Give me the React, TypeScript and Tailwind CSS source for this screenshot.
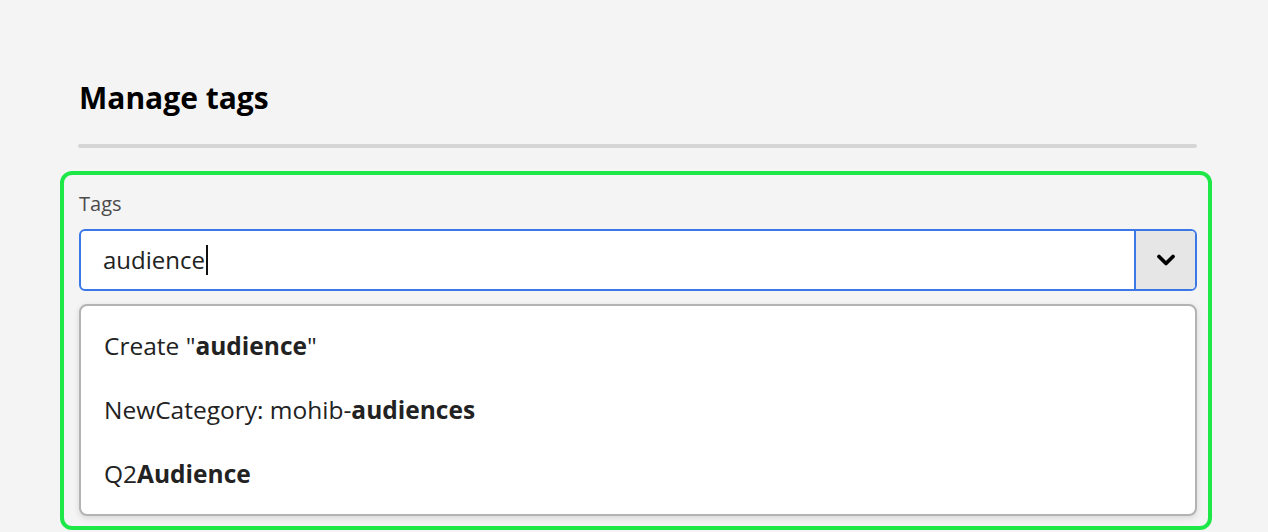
import { ChevronDown } from 'lucide-react';

const items = [
  { pre: 'Create "', bold: 'audience', post: '"' },
  { pre: 'NewCategory: mohib-', bold: 'audiences', post: '' },
  { pre: 'Q2', bold: 'Audience', post: '' },
];

export default function App() {
  return (
    <div className="min-h-[532px] bg-[#f4f4f4] pt-[78px] pl-[60px] pr-[56px] font-['Open_Sans',sans-serif] text-[#222]">
      <h1 className="ml-[19px] text-[30px] font-bold leading-[40px] text-black">Manage tags</h1>

      <div className="mt-[26px] ml-[18px] mr-[15px] h-[4px] rounded-full bg-[#d5d5d5]" />

      <div className="mt-[23px] rounded-[12px] border-4 border-[#1ee848] pl-[15px] pr-[11px] pt-[15px] pb-[10px]">
        <label className="block text-[20px] leading-[27px] text-[#4b4b4b]">Tags</label>

        <div className="mt-[12px] flex h-[62px] rounded-[6px] border-2 border-[#3b78e7] bg-white">
          <div className="flex flex-1 items-center pl-[22px] text-[24px]">
            <span>audience</span>
            <span className="ml-[1px] h-[30px] w-[2px] bg-[#111]" />
          </div>
          <button className="flex w-[61px] items-center justify-center rounded-r-[4px] border-l-2 border-[#3b78e7] bg-[#e6e6e6]">
            <ChevronDown size={28} strokeWidth={3.2} className="text-black" />
          </button>
        </div>

        <ul className="mt-[13px] rounded-[8px] border-2 border-[#b3b3b3] bg-white py-[8px] shadow-[0_2px_6px_rgba(0,0,0,0.12)]">
          {items.map((it) => (
            <li key={it.pre} className="flex h-[64px] items-center px-[23px] text-[24.5px]">
              <span>
                {it.pre}
                <b className="font-bold">{it.bold}</b>
                {it.post}
              </span>
            </li>
          ))}
        </ul>
      </div>
    </div>
  );
}
